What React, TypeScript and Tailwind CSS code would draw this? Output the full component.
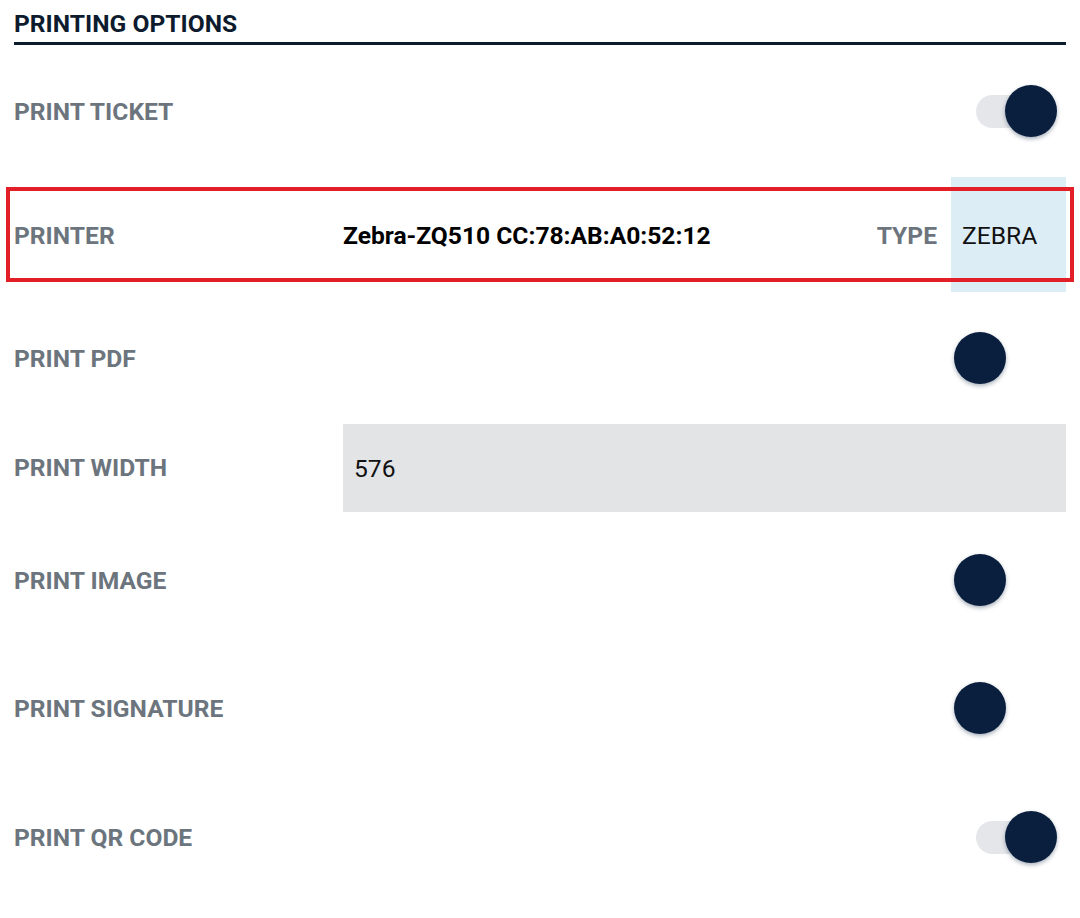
const FONT = "font-['Roboto','Liberation_Sans',sans-serif]"

function Label({ children }: { children: React.ReactNode }) {
  return <span className="text-[24.6px] font-bold text-[#6c757d] pt-[2px]">{children}</span>
}

function Toggle({ on }: { on: boolean }) {
  return (
    <div className="relative w-[103px] h-[54px] mr-[9px]">
      {on && <div className="absolute left-[22px] top-[11px] w-[64px] h-[33px] rounded-full bg-[#e4e6e9]" />}
      <div
        className={
          on
            ? 'absolute left-[51px] top-[1px] w-[52px] h-[52px] rounded-full bg-[#0a1f3e] shadow-[0_2px_4px_rgba(10,31,62,0.35)]'
            : 'absolute left-0 top-[1px] w-[52px] h-[52px] rounded-full bg-[#0a1f3e] shadow-[0_2px_4px_rgba(10,31,62,0.35)]'
        }
      />
    </div>
  )
}

function ToggleRow({ label, on, h }: { label: string; on: boolean; h: string }) {
  return (
    <div className={`flex items-center justify-between ${h}`}>
      <Label>{label}</Label>
      <Toggle on={on} />
    </div>
  )
}

export default function App() {
  return (
    <div className={`${FONT} bg-white w-[1080px] h-[918px] px-[14px] pr-[14px]`}>
      <div className="h-[45px] border-b-[3px] border-[#0d1b2e] pt-[9px]">
        <h2 className="text-[24.6px] font-bold text-[#0d1b2e] leading-[29px]">PRINTING OPTIONS</h2>
      </div>

      <ToggleRow label="PRINT TICKET" on h="h-[132px]" />

      <div className="relative flex items-center h-[115px]">
        <div className="w-[329px] pt-[3px]">
          <Label>PRINTER</Label>
        </div>
        <span className="text-[24.6px] font-bold text-black pt-[3px]">Zebra-ZQ510 CC:78:AB:A0:52:12</span>
        <div className="flex-1" />
        <span className="mr-[14px] pt-[3px]">
          <Label>TYPE</Label>
        </span>
        <div className="w-[115px] h-full bg-[#dcedf5] flex items-center pl-[11px] pt-[3px]">
          <span className="text-[24.6px] text-[#111]">ZEBRA</span>
        </div>
        <div className="absolute -left-[8px] -right-[8px] top-[10px] bottom-[10px] border-4 border-[#e21f26]" />
      </div>

      <ToggleRow label="PRINT PDF" on={false} h="h-[132px]" />

      <div className="flex items-center h-[88px]">
        <div className="w-[329px]">
          <Label>PRINT WIDTH</Label>
        </div>
        <div className="flex-1 h-full bg-[#e3e4e6] flex items-center pl-[11px] pt-[2px]">
          <span className="text-[24.6px] text-[#111]">576</span>
        </div>
      </div>

      <ToggleRow label="PRINT IMAGE" on={false} h="h-[136px]" />
      <ToggleRow label="PRINT SIGNATURE" on={false} h="h-[120px]" />
      <ToggleRow label="PRINT QR CODE" on h="h-[138px]" />
    </div>
  )
}
